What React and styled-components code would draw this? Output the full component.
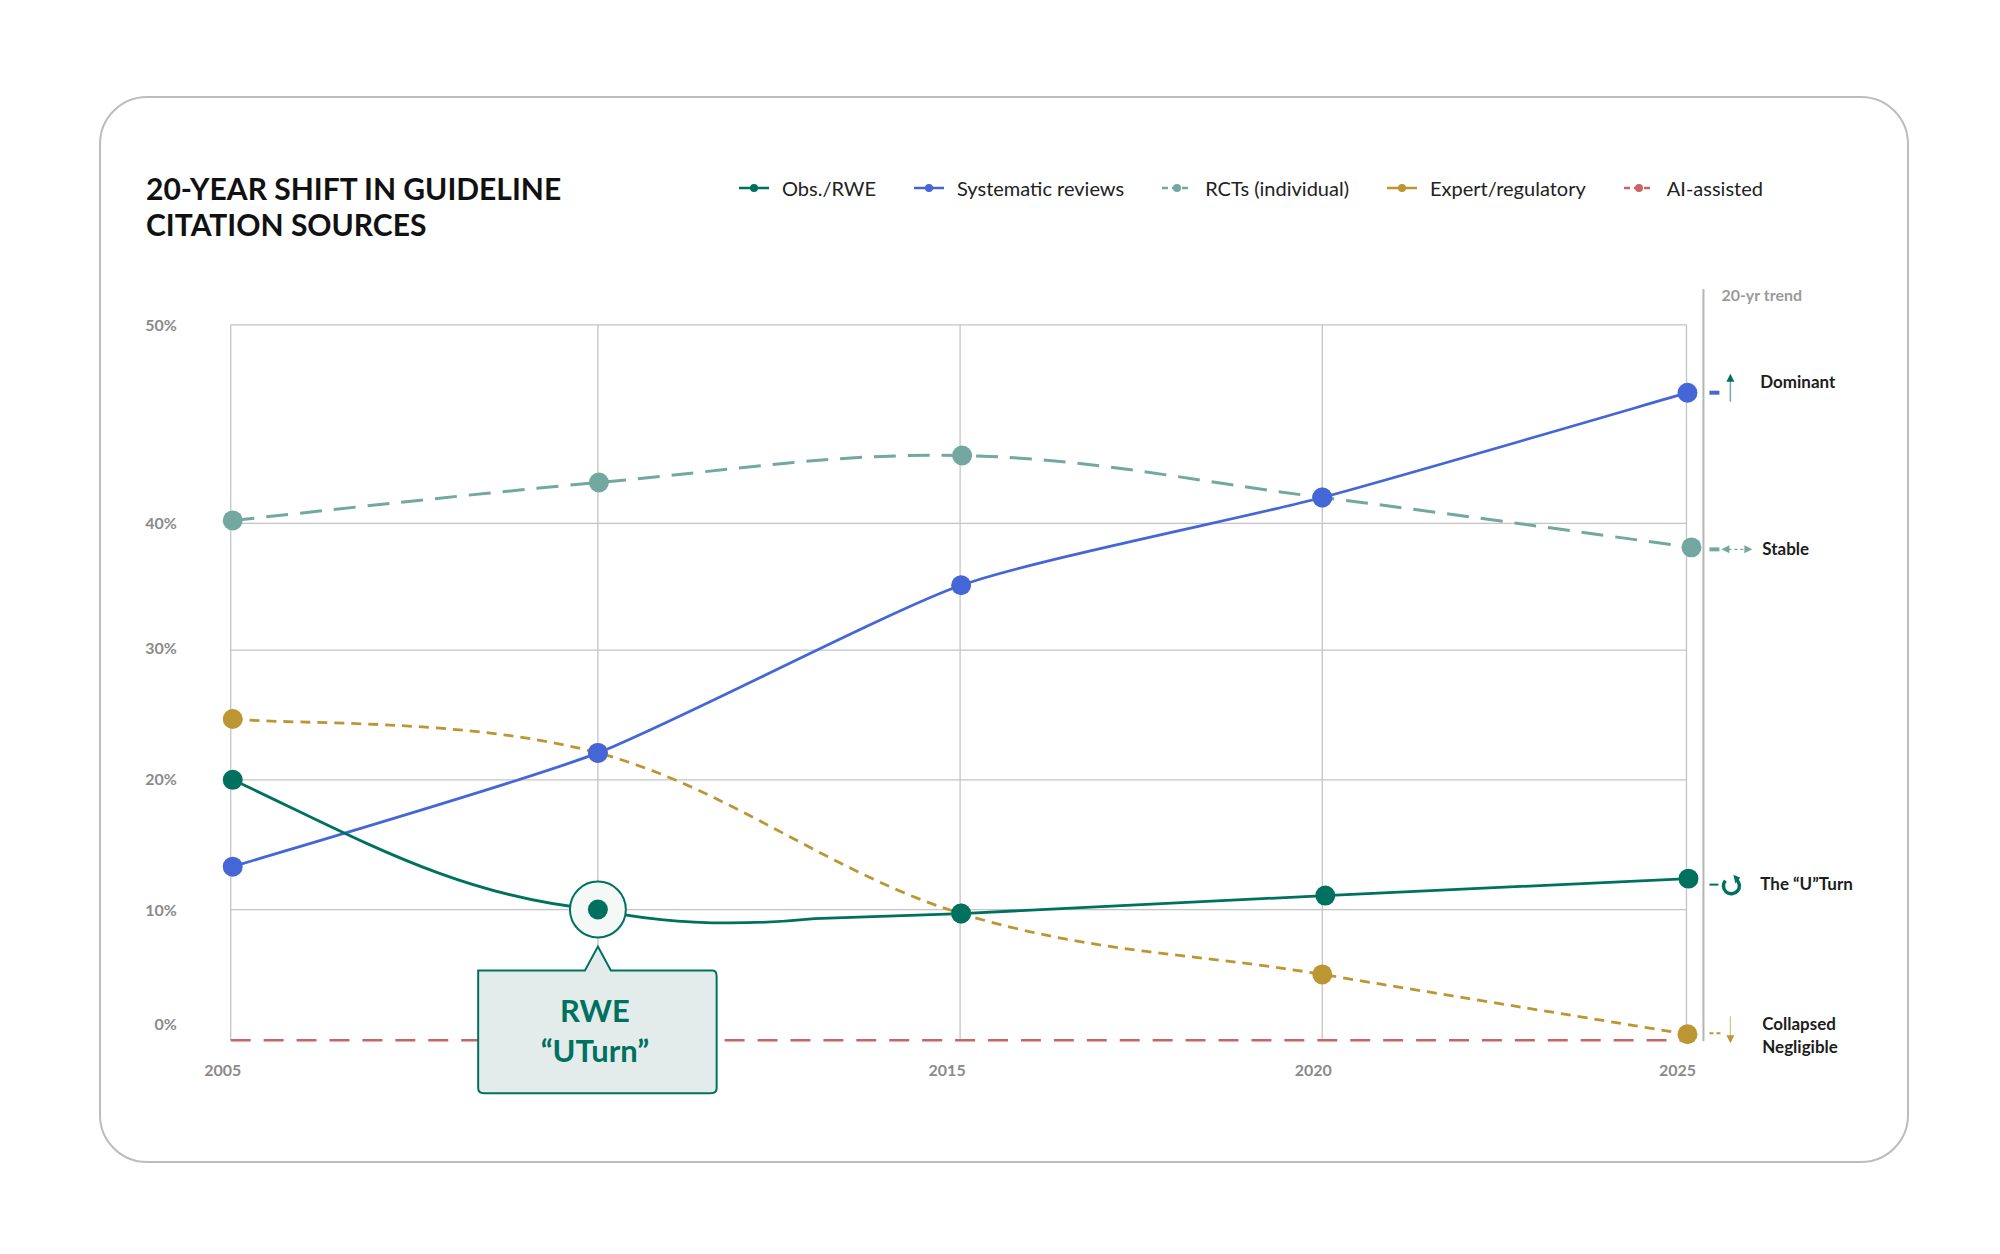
import React from "react";
import styled, { createGlobalStyle } from "styled-components";

const Global = createGlobalStyle`
  body { margin: 0; background: #fff; font-family: Lato, "Open Sans", sans-serif; }
`;

const C = {
  obs: "#00705f",
  sys: "#4466d6",
  rct: "#72a89f",
  exp: "#bd9634",
  ai: "#c96464",
  grid: "#c4c4c4",
  label: "#8a8a8a",
};

const Card = styled.div`
  margin: 96px 0 0 99px;
  width: 1810px;
  height: 1067px;
  box-sizing: border-box;
  border: 2px solid #bcbcbc;
  border-radius: 48px;
  display: flex;
  flex-direction: column;
  overflow: hidden;
`;

const Header = styled.div`
  height: 164px;
  flex: none;
  box-sizing: border-box;
  padding: 72px 0 0 45px;
  display: flex;
  align-items: flex-start;
`;

const Title = styled.h1`
  margin: 0;
  width: 592px;
  font-size: 30px;
  line-height: 36px;
  font-weight: 700;
  color: #111;
`;

const Legend = styled.div`
  display: flex;
  gap: 37px;
  padding-top: 6px;
`;

const Item = styled.div`
  display: flex;
  align-items: center;
  gap: 12px;
  font-size: 20px;
  color: #222;
`;

function LegendIcon({ color, dashed }) {
  return (
    <svg width="32" height="12" viewBox="0 0 32 12">
      <line x1="1" y1="6" x2="31" y2="6" stroke={color} strokeWidth="2.5" strokeDasharray={dashed ? "6 4" : undefined} />
      <circle cx="16" cy="6" r="4" fill={color} />
    </svg>
  );
}

// catmull-rom to bezier
function smooth(pts, t = 0.18) {
  let d = `M${pts[0][0]},${pts[0][1]}`;
  for (let i = 0; i < pts.length - 1; i++) {
    const p0 = pts[i - 1] || pts[i];
    const p1 = pts[i];
    const p2 = pts[i + 1];
    const p3 = pts[i + 2] || p2;
    const c1 = [p1[0] + (p2[0] - p0[0]) * t, p1[1] + (p2[1] - p0[1]) * t];
    const c2 = [p2[0] - (p3[0] - p1[0]) * t, p2[1] - (p3[1] - p1[1]) * t];
    d += ` C${c1[0]},${c1[1]} ${c2[0]},${c2[1]} ${p2[0]},${p2[1]}`;
  }
  return d;
}

const sys = [[237, 870], [603, 756], [967, 588], [1329, 500], [1695, 395]];
const rct = [[237, 523], [604, 485], [968, 458], [1329, 500], [1699, 550]];
const exp = [[237, 722], [603, 756], [967, 917], [1329, 978], [1695, 1038]];
const obs = [[237, 783], [603, 913], [967, 917], [1332, 899], [1696, 882]];
const obsPath =
  "M237,783 C360,840 460,900 603,913 C680,930 760,928 820,922 L967,917 L1332,899 L1696,882";

const legend = [
  ["Obs./RWE", C.obs, false],
  ["Systematic reviews", C.sys, false],
  ["RCTs (individual)", C.rct, true],
  ["Expert/regulatory", C.exp, false],
  ["AI-assisted", C.ai, true],
];

const yLabels = [["50%", 327], ["40%", 526], ["30%", 651], ["20%", 782], ["10%", 913], ["0%", 1028]];
const xLabels = [["2005", 227], ["2015", 953], ["2020", 1320], ["2025", 1685]];

function Dots({ pts, color }) {
  return pts.map(([x, y], i) => <circle key={i} cx={x} cy={y} r="10" fill={color} />);
}

function Chart() {
  return (
    <svg width="1806" height="901" viewBox="107 264 1806 901" fontFamily="Lato, sans-serif">
      {[526, 653, 783, 913].map((y) => (
        <line key={y} x1="235" x2="1694" y1={y} y2={y} stroke={C.grid} strokeWidth="1.3" />
      ))}
      <line x1="235" x2="1694" y1="327" y2="327" stroke={C.grid} strokeWidth="1.3" />
      {[235, 603, 966, 1329, 1694].map((x) => (
        <line key={x} x1={x} x2={x} y1="327" y2="1044" stroke={C.grid} strokeWidth="1.3" />
      ))}
      <line x1="1711" x2="1711" y1="291" y2="1045" stroke="#b5b5b5" strokeWidth="2" />
      {yLabels.map(([t, y]) => (
        <text key={t} x="181" y={y + 6} textAnchor="end" fontSize="16" fontWeight="700" fill={C.label}>{t}</text>
      ))}
      {xLabels.map(([t, x]) => (
        <text key={t} x={x} y={1080} textAnchor="middle" fontSize="16" fontWeight="700" fill={C.label}>{t}</text>
      ))}

      <line x1="235" x2="1694" y1="1044" y2="1044" stroke={C.ai} strokeWidth="2.5" strokeDasharray="20 13" />
      <path d={smooth(rct)} fill="none" stroke={C.rct} strokeWidth="3" strokeDasharray="22 12" />
      <path d={smooth(exp)} fill="none" stroke={C.exp} strokeWidth="2.8" strokeDasharray="10 7" />
      <path d={smooth(sys, 0.1)} fill="none" stroke={C.sys} strokeWidth="2.8" />
      <path d={obsPath} fill="none" stroke={C.obs} strokeWidth="2.8" />
      <Dots pts={rct} color={C.rct} />
      <Dots pts={exp} color={C.exp} />
      <Dots pts={sys} color={C.sys} />
      <Dots pts={obs.filter((_, i) => i !== 1)} color={C.obs} />

      <path d="M483,974 L590,974 L603,950 L616,974 L718,974 Q722,974 722,980 L722,1092 Q722,1097 716,1097 L489,1097 Q483,1097 483,1092 Z"
        fill="#e3ecea" stroke={C.obs} strokeWidth="2" />
      <circle cx="603" cy="913" r="28" fill="#f4f8f7" stroke={C.obs} strokeWidth="2" />
      <circle cx="603" cy="913" r="10" fill={C.obs} />
      <text x="600" y="1026" textAnchor="middle" fontSize="31" fontWeight="700" fill={C.obs}>RWE</text>
      <text x="600" y="1066" textAnchor="middle" fontSize="31" fontWeight="700" fill={C.obs}>“UTurn”</text>

      <text x="1729" y="303" fontSize="16" fontWeight="700" fill="#9a9a9a">20-yr trend</text>
      <g fontSize="17" fontWeight="700" fill="#1d1d1d">
        <text x="1768" y="390">Dominant</text>
        <text x="1770" y="558">Stable</text>
        <text x="1768" y="893">The “U”Turn</text>
        <text x="1770" y="1034">Collapsed</text>
        <text x="1770" y="1057">Negligible</text>
      </g>
      <line x1="1717" x2="1727" y1="395" y2="395" stroke={C.sys} strokeWidth="4" />
      <line x1="1738" x2="1738" y1="404" y2="382" stroke={C.rct} strokeWidth="1.5" />
      <path d="M1734,384 L1738,376 L1742,384 Z" fill={C.obs} />
      <line x1="1717" x2="1727" y1="552" y2="552" stroke={C.rct} strokeWidth="4" />
      <line x1="1736" x2="1752" y1="552" y2="552" stroke={C.rct} strokeWidth="1.3" strokeDasharray="3 3" />
      <path d="M1729,552 L1737,548 L1737,556 Z M1760,552 L1752,548 L1752,556 Z" fill={C.rct} />
      <line x1="1717" x2="1726" y1="888" y2="888" stroke={C.obs} strokeWidth="2" />
      <path d="M1733,884 A8,8 0 1 0 1744,883" fill="none" stroke={C.obs} strokeWidth="3.5" />
      <path d="M1741,878 L1748,881 L1743,887 Z" fill={C.obs} />
      <line x1="1717" x2="1729" y1="1037" y2="1037" stroke={C.exp} strokeWidth="2" strokeDasharray="4 3" />
      <line x1="1738" x2="1738" y1="1020" y2="1040" stroke={C.exp} strokeWidth="1.2" opacity="0.6" />
      <path d="M1734,1039 L1742,1039 L1738,1047 Z" fill={C.exp} />
    </svg>
  );
}

export default function App() {
  return (
    <>
      <Global />
      <Card>
        <Header>
          <Title>20-YEAR SHIFT IN GUIDELINE<br />CITATION SOURCES</Title>
          <Legend>
            {legend.map(([t, c, d]) => (
              <Item key={t}>
                <LegendIcon color={c} dashed={d} />
                {t}
              </Item>
            ))}
          </Legend>
        </Header>
        <Chart />
      </Card>
    </>
  );
}
